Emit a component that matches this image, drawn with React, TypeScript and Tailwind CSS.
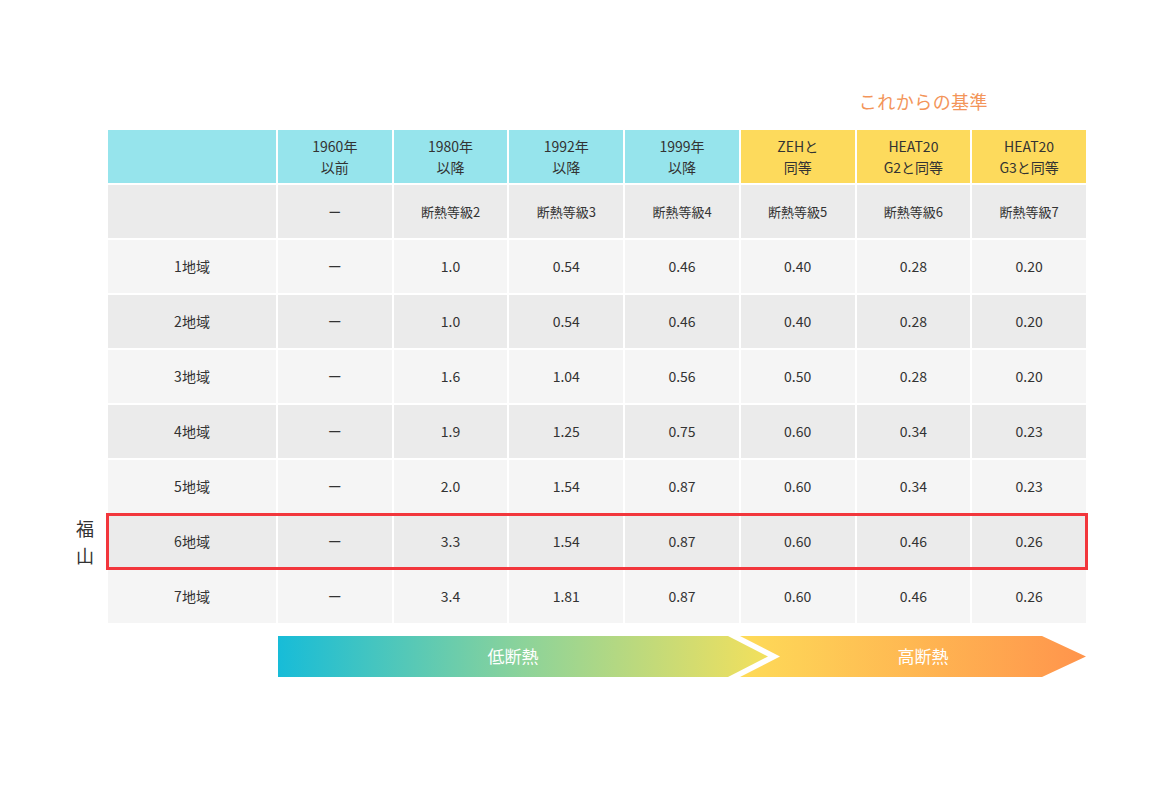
const cols = ['1960年\n以前', '1980年\n以降', '1992年\n以降', '1999年\n以降', 'ZEHと\n同等', 'HEAT20\nG2と同等', 'HEAT20\nG3と同等']
const grades = ['ー', '断熱等級2', '断熱等級3', '断熱等級4', '断熱等級5', '断熱等級6', '断熱等級7']
const rows = [
  ['1地域', 'ー', '1.0', '0.54', '0.46', '0.40', '0.28', '0.20'],
  ['2地域', 'ー', '1.0', '0.54', '0.46', '0.40', '0.28', '0.20'],
  ['3地域', 'ー', '1.6', '1.04', '0.56', '0.50', '0.28', '0.20'],
  ['4地域', 'ー', '1.9', '1.25', '0.75', '0.60', '0.34', '0.23'],
  ['5地域', 'ー', '2.0', '1.54', '0.87', '0.60', '0.34', '0.23'],
  ['6地域', 'ー', '3.3', '1.54', '0.87', '0.60', '0.46', '0.26'],
  ['7地域', 'ー', '3.4', '1.81', '0.87', '0.60', '0.46', '0.26'],
]

const grid = 'grid grid-cols-[168px_repeat(7,1fr)] gap-x-[2px]'

export default function App() {
  return (
    <div
      className="w-[1160px] h-[790px] bg-white text-[#333] text-[14px] pt-[88px] pl-[108px]"
      style={{ fontFamily: '"Noto Sans CJK JP", "Noto Sans", sans-serif' }}
    >
      <div className="w-[978px] flex flex-col gap-[2px]">
        <div className="flex justify-end pr-[98px] h-[40px] text-[18px] text-[#f3955a] tracking-wide">
          これからの基準
        </div>
        <div className={`${grid} h-[53px]`}>
          <div className="bg-[#96e4ec]" />
          {cols.map((c, i) => (
            <div
              key={c}
              className={`${i >= 4 ? 'bg-[#fdda5c]' : 'bg-[#96e4ec]'} flex items-center justify-center text-center whitespace-pre leading-[21px]`}
            >
              {c}
            </div>
          ))}
        </div>
        <div className={`${grid} h-[53px]`}>
          <div className="bg-[#ebebeb]" />
          {grades.map((g) => (
            <div key={g} className="bg-[#ebebeb] flex items-center justify-center text-[13px]">
              {g}
            </div>
          ))}
        </div>
        {rows.map((r, ri) => {
          const bg = ri % 2 === 0 ? 'bg-[#f5f5f5]' : 'bg-[#ebebeb]'
          const hl = ri === 5
          return (
            <div
              key={r[0]}
              className={`${grid} h-[53px] relative ${hl ? 'outline-[3px] outline-solid outline-[#f2363c] -outline-offset-1' : ''}`}
            >
              {hl && (
                <div className="absolute right-full mr-[14px] top-0 h-full flex flex-col justify-center items-center text-[18px] leading-[27px]">
                  <span>福</span>
                  <span>山</span>
                </div>
              )}
              {r.map((v, i) => (
                <div key={i} className={`${bg} flex items-center justify-center`}>
                  {v}
                </div>
              ))}
            </div>
          )
        })}
        <div className="pl-[170px] pt-[11px]">
          <svg width="808" height="41" viewBox="0 0 808 41">
            <defs>
              <linearGradient id="g1" x1="0" x2="1">
                <stop offset="0" stopColor="#17bcd8" />
                <stop offset="0.5" stopColor="#8cd39a" />
                <stop offset="1" stopColor="#f3e05c" />
              </linearGradient>
              <linearGradient id="g2" x1="0" x2="1">
                <stop offset="0" stopColor="#fedb58" />
                <stop offset="1" stopColor="#ff944c" />
              </linearGradient>
            </defs>
            <polygon points="0,0 450,0 490,20.5 450,41 0,41" fill="url(#g1)" />
            <polygon points="462,0 764,0 808,20.5 764,41 462,41 502,20.5" fill="url(#g2)" />
            <text x="235" y="27" textAnchor="middle" fill="#fff" fontSize="17">低断熱</text>
            <text x="645" y="27" textAnchor="middle" fill="#fff" fontSize="17">高断熱</text>
          </svg>
        </div>
      </div>
    </div>
  )
}
